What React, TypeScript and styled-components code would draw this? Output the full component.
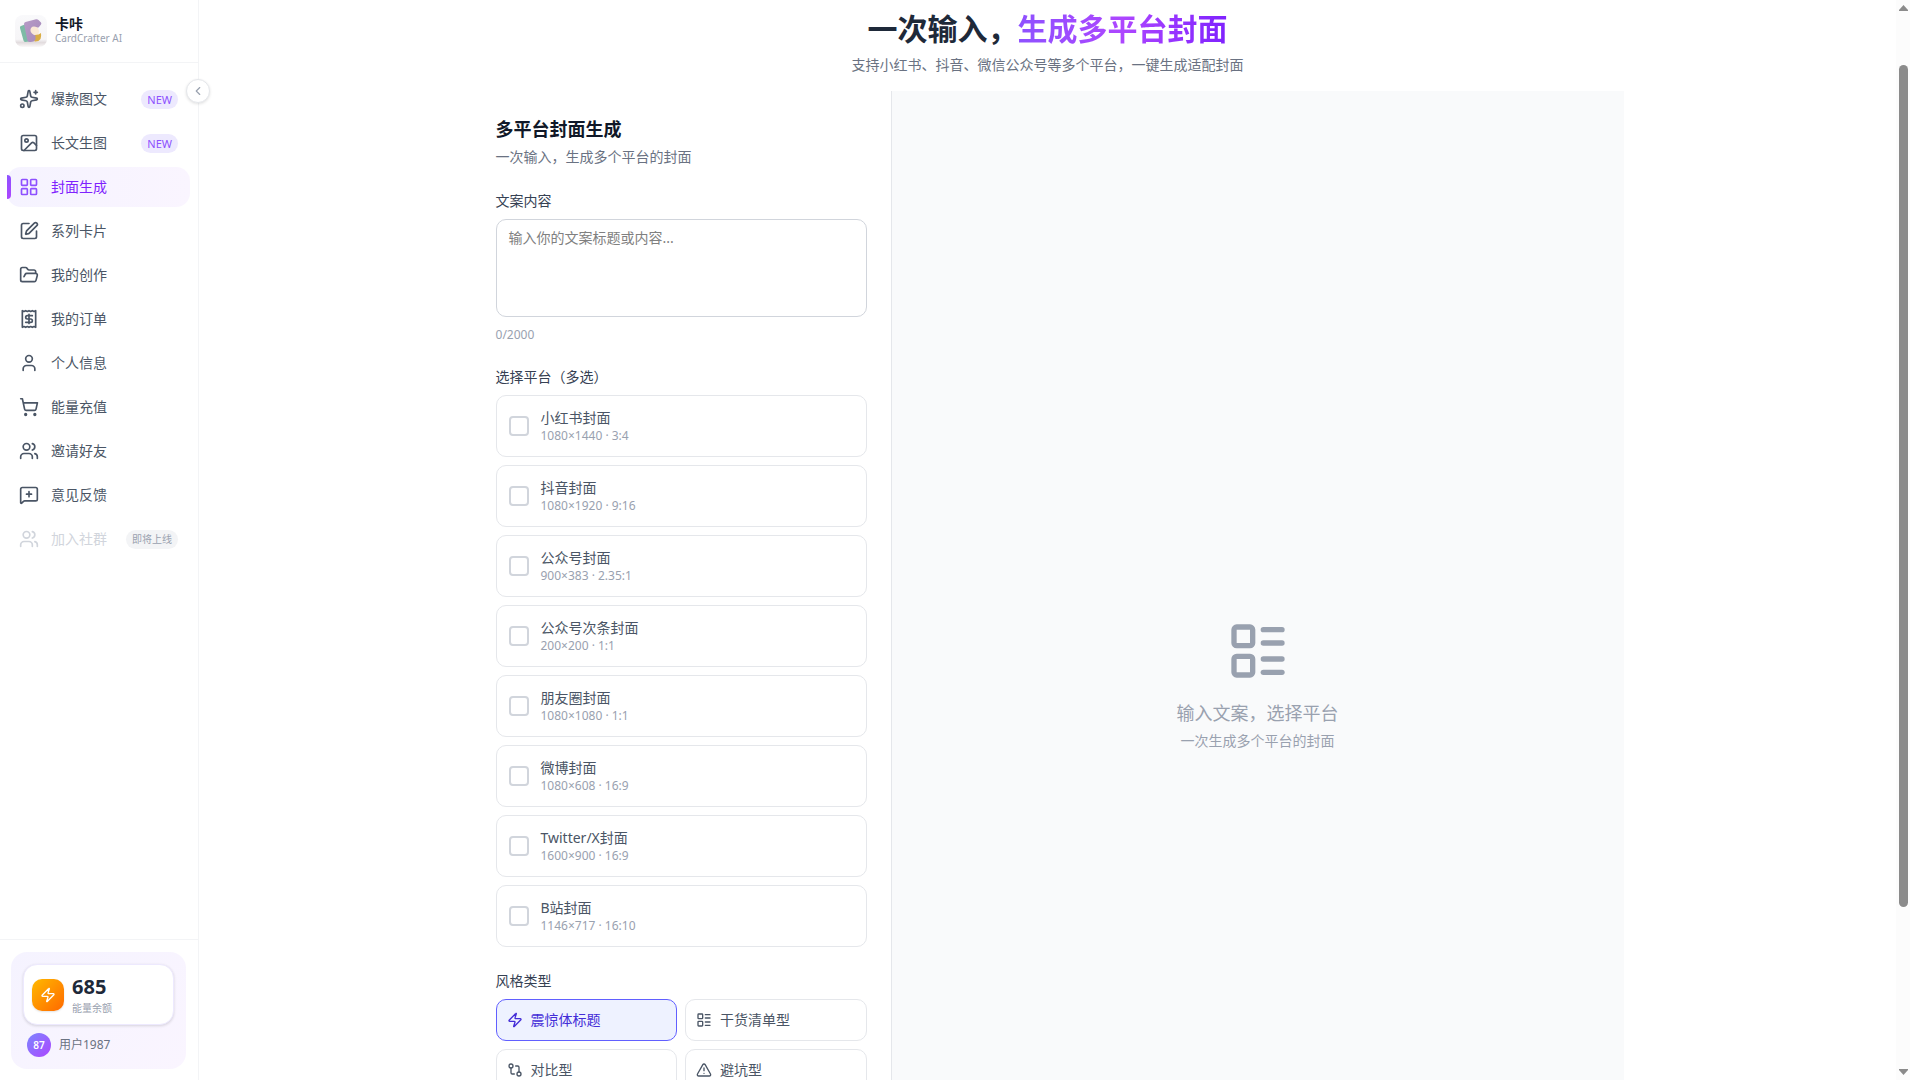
import React, { useState } from "react";
import styled, { createGlobalStyle, css } from "styled-components";
import {
  ChevronLeft,
  FolderOpen,
  GitCompare,
  Image as ImageIcon,
  LayoutGrid,
  LayoutList,
  MessageSquarePlus,
  ShoppingCart,
  Sparkles,
  SquarePen,
  TriangleAlert,
  User,
  Users,
  Zap,
} from "lucide-react";

const c = {
  gray50: "#f9fafb",
  gray100: "#f3f4f6",
  gray200: "#e5e7eb",
  gray300: "#d1d5dc",
  gray400: "#99a1af",
  gray500: "#6a7282",
  gray600: "#4a5565",
  gray700: "#364153",
  gray800: "#1e2939",
  gray900: "#101828",
  violet50: "#f5f3ff",
  violet100: "#ede9fe",
  violet500: "#8e51ff",
  violet600: "#7f22fe",
  purple50: "#faf5ff",
  purple500: "#ad46ff",
};

const GlobalStyle = createGlobalStyle`
  *, *::before, *::after { box-sizing: border-box; }
  body {
    margin: 0;
    background: #fff;
    color: ${c.gray900};
    font-family: "Noto Sans", "Noto Sans CJK SC", sans-serif;
    font-size: 14px;
    line-height: 20px;
  }
  h1, h2, p { margin: 0; }
  button, textarea { font: inherit; }
  button { cursor: pointer; }
  svg { display: block; flex-shrink: 0; }
`;

const Shell = styled.div`
  display: flex;
  height: 100vh;
  overflow: hidden;
`;

/* ---------- Sidebar ---------- */

const Sidebar = styled.aside`
  position: relative;
  display: flex;
  flex-direction: column;
  flex: 0 0 199px;
  border-right: 1px solid ${c.gray100};
`;

const Brand = styled.a`
  display: flex;
  align-items: center;
  gap: 8px;
  padding: 15px;
  border-bottom: 1px solid ${c.gray100};
  color: inherit;
  text-decoration: none;
`;

const BrandText = styled.span`
  display: flex;
  flex-direction: column;
`;

const BrandName = styled.span`
  font-weight: 700;
  line-height: 15px;
`;

const BrandSub = styled.span`
  color: ${c.gray400};
  font-size: 10px;
  line-height: 15px;
`;

const Collapse = styled.button`
  position: absolute;
  top: 79px;
  right: -12px;
  display: grid;
  place-items: center;
  width: 24px;
  height: 24px;
  padding: 0;
  border: 1px solid ${c.gray200};
  border-radius: 50%;
  background: #fff;
  color: ${c.gray400};
  box-shadow: 0 1px 3px rgba(0, 0, 0, 0.12);
`;

const Nav = styled.nav`
  display: flex;
  flex: 1;
  flex-direction: column;
  gap: 4px;
  padding: 16px 8px 16px 7px;
`;

const NavItem = styled.a<{ $active?: boolean; $disabled?: boolean }>`
  position: relative;
  display: flex;
  align-items: center;
  gap: 12px;
  height: 40px;
  padding: 0 12px;
  border-radius: 14px;
  color: ${(p) => (p.$active ? c.violet600 : p.$disabled ? c.gray300 : c.gray600)};
  text-decoration: none;
  ${(p) =>
    p.$active &&
    css`
      background: linear-gradient(90deg, ${c.violet50}, ${c.purple50});
      svg { color: ${c.violet500}; }
      &::before {
        content: "";
        position: absolute;
        top: 8px;
        left: 0;
        width: 4px;
        height: 24px;
        border-radius: 0 4px 4px 0;
        background: linear-gradient(${c.violet500}, ${c.purple500});
      }
    `}
`;

const Badge = styled.span<{ $muted?: boolean }>`
  margin-left: auto;
  padding: 2px 6px;
  border-radius: 10px;
  background: ${(p) => (p.$muted ? c.gray100 : c.violet100)};
  color: ${(p) => (p.$muted ? c.gray400 : c.violet500)};
  font-size: ${(p) => (p.$muted ? "10px" : "11px")};
  line-height: 15px;
`;

const Account = styled.div`
  padding: 12px 12px 11px 11px;
  border-top: 1px solid ${c.gray100};
`;

const AccountPanel = styled.div`
  display: flex;
  flex-direction: column;
  gap: 8px;
  padding: 12px;
  border-radius: 16px;
  background: linear-gradient(135deg, ${c.violet50}, ${c.purple50});
`;

const Balance = styled.div`
  display: flex;
  align-items: center;
  gap: 8px;
  padding: 8px;
  border: 1px solid ${c.violet100};
  border-radius: 14px;
  background: #fff;
  box-shadow: 0 1px 3px rgba(0, 0, 0, 0.14);
`;

const BalanceIcon = styled.span`
  display: grid;
  place-items: center;
  width: 32px;
  height: 32px;
  border-radius: 10px;
  background: linear-gradient(135deg, #ffb900, #ff6900);
  color: #fff;
  box-shadow: 0 1px 2px rgba(0, 0, 0, 0.12);
`;

const BalanceValue = styled.div`
  color: ${c.gray800};
  font-size: 20px;
  font-weight: 700;
  line-height: 28px;
`;

const BalanceLabel = styled.div`
  color: ${c.gray400};
  font-size: 10px;
  line-height: 15px;
`;

const UserRow = styled.div`
  display: flex;
  align-items: center;
  gap: 8px;
  padding: 0 4px;
  color: ${c.gray500};
  font-size: 12px;
`;

const Avatar = styled.span`
  display: grid;
  place-items: center;
  width: 24px;
  height: 24px;
  border-radius: 50%;
  background: linear-gradient(135deg, #7c86ff, ${c.purple500});
  color: #fff;
  font-size: 10px;
  font-weight: 600;
`;

/* ---------- Main ---------- */

const Main = styled.main`
  flex: 1;
  min-width: 0;
  overflow-y: auto;
  scrollbar-width: none;
`;

const Header = styled.header`
  display: flex;
  flex-direction: column;
  align-items: center;
  gap: 8px;
  padding: 11px 24px 16px;
`;

const Title = styled.h1`
  color: ${c.gray800};
  font-size: 30px;
  font-weight: 700;
  line-height: 36px;
`;

const TitleAccent = styled.span`
  background: linear-gradient(90deg, ${c.violet500}, ${c.purple500}, ${c.violet600});
  background-clip: text;
  -webkit-background-clip: text;
  color: transparent;
`;

const Muted = styled.p`
  color: ${c.gray500};
`;

const Workspace = styled.div`
  display: flex;
  max-width: 1152px;
  min-height: 1188px;
  margin: 0 auto;
`;

const FormPanel = styled.form`
  display: flex;
  flex: 0 0 420px;
  flex-direction: column;
  gap: 24px;
  padding: 24px;
  border-right: 1px solid ${c.gray200};
`;

const FormHead = styled.div`
  display: flex;
  flex-direction: column;
  gap: 4px;
`;

const FormTitle = styled.h2`
  font-size: 18px;
  font-weight: 700;
  line-height: 28px;
`;

const Field = styled.div`
  display: flex;
  flex-direction: column;
  gap: 8px;
`;

const FieldLabel = styled.label`
  color: ${c.gray700};
`;

const TextArea = styled.textarea`
  display: block;
  width: 100%;
  padding: 8px 12px;
  border: 1px solid ${c.gray300};
  border-radius: 10px;
  background: #fff;
  color: ${c.gray900};
  resize: none;
  &::placeholder { color: #808080; }
`;

const Counter = styled.div`
  padding-top: 2px;
  color: ${c.gray400};
  font-size: 12px;
  line-height: 16px;
`;

const PlatformCard = styled.label`
  display: flex;
  align-items: center;
  gap: 12px;
  padding: 12px;
  border: 1px solid ${c.gray200};
  border-radius: 10px;
  cursor: pointer;
`;

const Check = styled.input`
  appearance: none;
  width: 20px;
  height: 20px;
  margin: 0;
  border: 2px solid ${c.gray300};
  border-radius: 4px;
  background: #fff;
  &:checked {
    border-color: #615fff;
    background: #615fff;
  }
`;

const PlatformText = styled.span`
  display: flex;
  flex-direction: column;
  color: ${c.gray600};
`;

const PlatformSize = styled.span`
  color: ${c.gray400};
  font-size: 12px;
  line-height: 16px;
`;

const StyleGrid = styled.div`
  display: grid;
  grid-template-columns: 1fr 1fr;
  gap: 8px;
`;

const StyleButton = styled.button<{ $active: boolean }>`
  display: flex;
  align-items: center;
  gap: 8px;
  height: 42px;
  padding: 0 10px;
  border: 1px solid ${(p) => (p.$active ? "#615fff" : c.gray200)};
  border-radius: 10px;
  background: ${(p) => (p.$active ? "#eef2ff" : "#fff")};
  color: ${(p) => (p.$active ? "#432dd7" : c.gray600)};
`;

const Preview = styled.section`
  display: flex;
  flex: 1;
  flex-direction: column;
  align-items: center;
  justify-content: center;
  background: ${c.gray50};
  color: ${c.gray400};
`;

const PreviewTitle = styled.p`
  margin: 16px 0 4px;
  font-size: 18px;
  line-height: 28px;
`;

/* ---------- Scroll rail ---------- */

const Rail = styled.div`
  display: flex;
  flex: 0 0 14px;
  flex-direction: column;
  align-items: center;
  padding: 5px 0;
  background: #fcfcfc;
  color: #8b8b8b;
`;

const RailTrack = styled.div`
  display: flex;
  flex: 1;
  flex-direction: column;
  width: 9px;
  padding: 54px 0 162px;
`;

const RailThumb = styled.div`
  flex: 1;
  border-radius: 5px;
  background: #8b8b8b;
`;

const Logo = () => (
  <svg width="32" height="32" viewBox="0 0 32 32" aria-hidden="true">
    <defs>
      <linearGradient id="logoBg" x1="0" y1="0" x2="0" y2="1">
        <stop offset="0" stopColor="#f9f9fb" />
        <stop offset="0.76" stopColor="#f6f5f7" />
        <stop offset="0.86" stopColor="#e2dcde" />
        <stop offset="1" stopColor="#fbf9f9" />
      </linearGradient>
      <linearGradient id="logoPurple" x1="0" y1="0" x2="1" y2="1">
        <stop offset="0" stopColor="#b79bc6" />
        <stop offset="1" stopColor="#a58abb" />
      </linearGradient>
    </defs>
    <rect width="32" height="32" rx="8" fill="url(#logoBg)" />
    <path d="M5 13 Q4.500 11.500 6 11 L11 9 L17 26 L10.500 27 Q9 27 8.500 25.500 Z" fill="#7dbba6" />
    <circle cx="18" cy="16.500" r="6" fill="#fae9d6" />
    <path d="M18 22 L20 20 L23.500 19.500 L26 18 Q26.500 21 25.500 24 Q23.500 27 19.500 26.500 Z" fill="#d9ad45" />
    <path
      d="M9 9 Q9 7.500 10.500 7 L21 4.300 Q22.500 4 23.500 5 L26 7.500 Q26.700 8.500 26 9.500 L24 12 Q23.200 13 22 12.300 Q18 10.500 16 13 Q14.500 16 17 18.500 Q18.500 20 20.500 20.500 L20.500 24.500 Q19 27.500 14.500 27 Q12.800 26.800 12.300 25 Z"
      fill="url(#logoPurple)"
    />
  </svg>
);

const OrderIcon = ({ size = 20 }: { size?: number }) => (
  <svg
    width={size}
    height={size}
    viewBox="0 0 24 24"
    fill="none"
    stroke="currentColor"
    strokeWidth="2"
    strokeLinecap="round"
    strokeLinejoin="round"
    aria-hidden="true"
  >
    <path d="M4 2v20l2-1 2 1 2-1 2 1 2-1 2 1 2-1 2 1V2l-2 1-2-1-2 1-2-1-2 1-2-1-2 1Z" />
    <path d="M16 8h-6a2 2 0 1 0 0 4h4a2 2 0 1 1 0 4H8" />
    <path d="M12 17.500v-11" />
  </svg>
);

const navItems = [
  { label: "爆款图文", icon: Sparkles, badge: "NEW" },
  { label: "长文生图", icon: ImageIcon, badge: "NEW" },
  { label: "封面生成", icon: LayoutGrid, active: true },
  { label: "系列卡片", icon: SquarePen },
  { label: "我的创作", icon: FolderOpen },
  { label: "我的订单", icon: OrderIcon },
  { label: "个人信息", icon: User },
  { label: "能量充值", icon: ShoppingCart },
  { label: "邀请好友", icon: Users },
  { label: "意见反馈", icon: MessageSquarePlus },
  { label: "加入社群", icon: Users, badge: "即将上线", disabled: true },
];

const platforms = [
  { name: "小红书封面", size: "1080×1440 · 3:4" },
  { name: "抖音封面", size: "1080×1920 · 9:16" },
  { name: "公众号封面", size: "900×383 · 2.35:1" },
  { name: "公众号次条封面", size: "200×200 · 1:1" },
  { name: "朋友圈封面", size: "1080×1080 · 1:1" },
  { name: "微博封面", size: "1080×608 · 16:9" },
  { name: "Twitter/X封面", size: "1600×900 · 16:9" },
  { name: "B站封面", size: "1146×717 · 16:10" },
];

const styleTypes = [
  { name: "震惊体标题", icon: Zap },
  { name: "干货清单型", icon: LayoutList },
  { name: "对比型", icon: GitCompare },
  { name: "避坑型", icon: TriangleAlert },
];

export default function App() {
  const [text, setText] = useState("");
  const [styleType, setStyleType] = useState("震惊体标题");

  return (
    <Shell>
      <GlobalStyle />
      <Sidebar>
        <Brand href="#">
          <Logo />
          <BrandText>
            <BrandName>卡咔</BrandName>
            <BrandSub>CardCrafter AI</BrandSub>
          </BrandText>
        </Brand>
        <Collapse type="button" aria-label="收起侧边栏">
          <ChevronLeft size={14} />
        </Collapse>
        <Nav>
          {navItems.map(({ label, icon: Icon, badge, active, disabled }) => (
            <NavItem
              key={label}
              href="#"
              $active={active}
              $disabled={disabled}
              aria-current={active ? "page" : undefined}
              aria-disabled={disabled}
            >
              <Icon size={20} />
              {label}
              {badge && <Badge $muted={disabled}>{badge}</Badge>}
            </NavItem>
          ))}
        </Nav>
        <Account>
          <AccountPanel>
            <Balance>
              <BalanceIcon>
                <Zap size={16} />
              </BalanceIcon>
              <div>
                <BalanceValue>685</BalanceValue>
                <BalanceLabel>能量余额</BalanceLabel>
              </div>
            </Balance>
            <UserRow>
              <Avatar>87</Avatar>
              用户1987
            </UserRow>
          </AccountPanel>
        </Account>
      </Sidebar>

      <Main>
        <Header>
          <Title>
            一次输入，<TitleAccent>生成多平台封面</TitleAccent>
          </Title>
          <Muted>支持小红书、抖音、微信公众号等多个平台，一键生成适配封面</Muted>
        </Header>
        <Workspace>
          <FormPanel onSubmit={(e) => e.preventDefault()}>
            <FormHead>
              <FormTitle>多平台封面生成</FormTitle>
              <Muted>一次输入，生成多个平台的封面</Muted>
            </FormHead>
            <Field>
              <FieldLabel htmlFor="copy">文案内容</FieldLabel>
              <TextArea
                id="copy"
                rows={4}
                maxLength={2000}
                placeholder="输入你的文案标题或内容..."
                value={text}
                onChange={(e) => setText(e.target.value)}
              />
              <Counter>{text.length}/2000</Counter>
            </Field>
            <Field role="group" aria-labelledby="platforms">
              <FieldLabel as="span" id="platforms">选择平台（多选）</FieldLabel>
              {platforms.map((p) => (
                <PlatformCard key={p.name}>
                  <Check type="checkbox" />
                  <PlatformText>
                    {p.name}
                    <PlatformSize>{p.size}</PlatformSize>
                  </PlatformText>
                </PlatformCard>
              ))}
            </Field>
            <Field role="group" aria-labelledby="styles">
              <FieldLabel as="span" id="styles">风格类型</FieldLabel>
              <StyleGrid>
                {styleTypes.map(({ name, icon: Icon }) => (
                  <StyleButton
                    key={name}
                    type="button"
                    $active={name === styleType}
                    aria-pressed={name === styleType}
                    onClick={() => setStyleType(name)}
                  >
                    <Icon size={16} />
                    {name}
                  </StyleButton>
                ))}
              </StyleGrid>
            </Field>
          </FormPanel>
          <Preview>
            <LayoutList size={64} />
            <PreviewTitle>输入文案，选择平台</PreviewTitle>
            <p>一次生成多个平台的封面</p>
          </Preview>
        </Workspace>
      </Main>

      <Rail aria-hidden="true">
        <svg width="9" height="6" viewBox="0 0 9 6">
          <path d="M4.500 0 9 5v1H0V5Z" fill="currentColor" />
        </svg>
        <RailTrack>
          <RailThumb />
        </RailTrack>
        <svg width="9" height="6" viewBox="0 0 9 6">
          <path d="M4.500 6 9 1V0H0v1Z" fill="currentColor" />
        </svg>
      </Rail>
    </Shell>
  );
}
